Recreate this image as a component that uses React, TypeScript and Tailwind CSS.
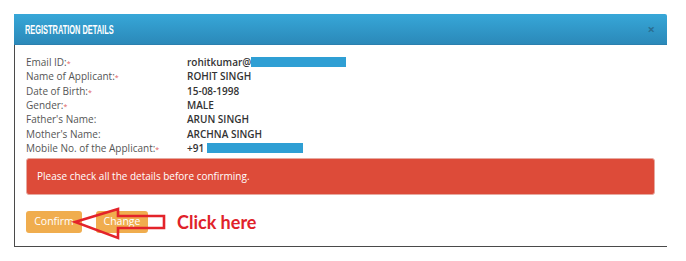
import React from "react";

const rows: { label: string; required: boolean; value: string; mask?: string }[] = [
  { label: "Email ID:", required: true, value: "rohitkumar@", mask: "w-[95px]" },
  { label: "Name of Applicant:", required: true, value: "ROHIT SINGH" },
  { label: "Date of Birth:", required: true, value: "15-08-1998" },
  { label: "Gender:", required: true, value: "MALE" },
  { label: "Father's Name:", required: false, value: "ARUN SINGH" },
  { label: "Mother's Name:", required: false, value: "ARCHNA SINGH" },
  { label: "Mobile No. of the Applicant:", required: true, value: "+91 ", mask: "w-[96px]" },
];

const ArrowMark = () => (
  <svg className="absolute left-0 top-0 pointer-events-none" width="686" height="261" viewBox="0 0 686 261">
    <polygon
      points="75,222 118,209 118,216 164,216 164,228 118,228 118,238"
      fill="none"
      stroke="#e3232a"
      strokeWidth="2.6"
      strokeLinejoin="miter"
    />
  </svg>
);

export default function App() {
  return (
    <div className="relative w-[686px] h-[261px] bg-white pt-[14px] pl-[14px] font-['Open_Sans',sans-serif]">
      <div className="w-[653px]">
        <div className="h-[31px] flex items-center justify-between pl-[11px] pr-[12px] rounded-tr-[2px] bg-gradient-to-b from-[#37a7d8] to-[#2b89b9] border-b border-[#2b7fae]">
          <span className="text-white font-bold text-[13px] leading-none uppercase font-['Liberation_Sans',sans-serif] origin-left scale-x-[0.57] whitespace-nowrap">
            Registration Details
          </span>
          <span className="text-[#2a6f93] text-[13px] leading-none font-bold">×</span>
        </div>
        <div className="border-l border-b border-[#4a4a4a] pl-[11px] pr-[12px] pt-[10px] pb-[13px]">
          <div className="flex flex-col">
            {rows.map((r) => (
              <div key={r.label} className="flex h-[14.3px] items-center text-[10px] leading-none">
                <div className="w-[161px] text-[#555]">
                  {r.label}
                  {r.required && <span className="text-[#e06060] text-[7px] align-middle">*</span>}
                </div>
                <div className="flex items-center text-[#333] font-semibold">
                  <span className="whitespace-pre">{r.value}</span>
                  {r.mask && <span className={`${r.mask} h-[10px] bg-[#2f9fd4]`} />}
                </div>
              </div>
            ))}
          </div>
          <div className="mt-[3px] h-[37px] rounded-[3px] bg-[#dd4b39] border border-[#e7a9a0] flex items-center pl-[10px] text-white text-[10px]">
            Please check all the details before confirming.
          </div>
          <div className="mt-[16px] flex items-center gap-[14px]">
            <button className="w-[56px] h-[22px] rounded-[3px] bg-[#f0ad4e] text-white text-[10.5px]">Confirm</button>
            <button className="w-[52px] h-[22px] rounded-[3px] bg-[#f0ad4e] text-white text-[10.5px]">Change</button>
            <span className="ml-[15px] text-[#e0222a] font-bold text-[18px] leading-none font-['Lato',sans-serif]">
              Click here
            </span>
          </div>
        </div>
      </div>
      <ArrowMark />
    </div>
  );
}
